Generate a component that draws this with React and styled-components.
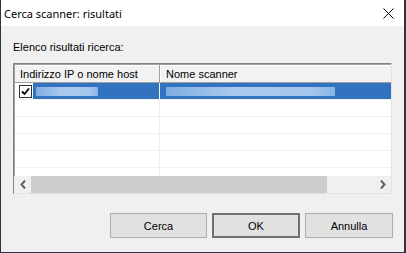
import React from 'react';
import styled, { createGlobalStyle } from 'styled-components';

const GlobalStyle = createGlobalStyle`
    html, body {
        margin: 0;
        padding: 0;
        background: #f0f0f0;
    }
    * {
        box-sizing: border-box;
    }
`;

const Window = styled.div`
    width: 406px;
    height: 253px;
    display: flex;
    flex-direction: column;
    background: #f0f0f0;
    border-left: 1px solid #2b3542;
    border-right: 2px solid #2b3542;
    border-bottom: 1px solid #2b3542;
    font-family: "Liberation Sans", Arial, sans-serif;
    font-size: 11px;
    color: #000;
`;

const TitleBar = styled.div`
    height: 26px;
    flex: none;
    display: flex;
    align-items: center;
    justify-content: space-between;
    background: #fff;
    padding: 0 10px 0 3px;
`;

const Title = styled.span`
    font-family: "Noto Sans", "Open Sans", sans-serif;
    font-size: 11px;
    line-height: 16px;
    padding-top: 1px;
`;

const CloseButton = styled.div`
    width: 12px;
    height: 12px;
    display: flex;
    align-items: center;
    justify-content: center;
`;

const Body = styled.div`
    flex: 1;
    display: flex;
    flex-direction: column;
    padding: 15px 11px 14px 12px;
`;

const Label = styled.div`
    line-height: 13px;
    margin-bottom: 9px;
`;

const ListView = styled.div`
    width: 379px;
    height: 131px;
    display: flex;
    flex-direction: column;
    background: #fff;
    border-top: 1px solid #828282;
    border-left: 1px solid #828282;
    border-right: 1px solid #e3e3e3;
    border-bottom: 1px solid #e3e3e3;
    box-shadow: inset 1px 1px 0 #a0a0a0;
    padding: 1px 0 0 1px;
    overflow: hidden;
`;

const HeaderRow = styled.div`
    height: 18px;
    flex: none;
    display: grid;
    grid-template-columns: 145px 1fr;
    background: #f2f2f2;
    border-bottom: 1px solid #a0a0a0;
    box-shadow: inset 0 1px 0 #fff;
`;

const HeaderCell = styled.div`
    display: flex;
    align-items: center;
    padding-left: ${p => p.$pad}px;
    border-right: ${p => (p.$divider ? '1px solid #a0a0a0' : 'none')};
    box-shadow: ${p => (p.$divider ? '1px 0 0 #fff' : 'none')};
    white-space: nowrap;
    overflow: hidden;
`;

const Rows = styled.div`
    flex: 1;
    overflow: hidden;
`;

const Row = styled.div`
    height: 17px;
    display: grid;
    grid-template-columns: 145px 1fr;
    border-bottom: 1px solid #f0f0f0;
`;

const Cell = styled.div`
    display: flex;
    align-items: center;
    border-right: ${p => (p.$divider ? `1px solid ${p.$selected ? '#5a8fd0' : '#f0f0f0'}` : 'none')};
    background: ${p => (p.$selected ? '#3173be' : 'transparent')};
    padding-left: ${p => p.$pad || 0}px;
`;

const CheckArea = styled.div`
    width: 18px;
    height: 100%;
    flex: none;
    background: #fff;
    display: flex;
    align-items: center;
    justify-content: center;
    padding-left: 2px;
`;

const CheckBox = styled.div`
    width: 13px;
    height: 13px;
    border: 1px solid #333;
    background: #fff;
    display: flex;
    align-items: center;
    justify-content: center;
`;

const Selection = styled.div`
    flex: 1;
    height: 100%;
    display: flex;
    align-items: center;
    padding-left: ${p => p.$pad}px;
    background: #3173be;
`;

const Blur = styled.div`
    width: ${p => p.$w}px;
    height: 9px;
    background: linear-gradient(90deg, #7eaee3 0%, #a9c9ee 40%, #a6c7ed 85%, #88b4e6 100%);
    border-radius: 1px;
`;

const ScrollBar = styled.div`
    height: 17px;
    flex: none;
    display: flex;
    background: #f0f0f0;
    margin-left: -1px;
`;

const ScrollButton = styled.div`
    width: 17px;
    flex: none;
    display: flex;
    align-items: center;
    justify-content: center;
`;

const Thumb = styled.div`
    width: 296px;
    height: 100%;
    background: #cdcdcd;
`;

const Track = styled.div`
    flex: 1;
`;

const ButtonRow = styled.div`
    display: flex;
    justify-content: flex-end;
    gap: 5px;
    margin-top: auto;
`;

const Button = styled.div`
    width: ${p => p.$w}px;
    height: 25px;
    display: flex;
    align-items: center;
    justify-content: center;
    background: #e1e1e1;
    border: ${p => (p.$default ? '2px solid #707070' : '1px solid #adadad')};
`;

const Chevron = ({ dir }) => (
    <svg width="8" height="9" viewBox="0 0 8 9">
        <path
            d={dir === 'left' ? 'M6 0.5 L2.5 4.5 L6 8.5' : 'M2 0.5 L5.5 4.5 L2 8.5'}
            fill="none"
            stroke="#606060"
            strokeWidth="2"
        />
    </svg>
);

const emptyRows = [1, 2, 3, 4, 5];

export default function App() {
    return (
        <>
            <GlobalStyle />
            <Window>
                <TitleBar>
                    <Title>Cerca scanner: risultati</Title>
                    <CloseButton>
                        <svg width="11" height="11" viewBox="0 0 11 11">
                            <path d="M0.5 0.5 L10.5 10.5 M10.5 0.5 L0.5 10.5" stroke="#000" strokeWidth="1" />
                        </svg>
                    </CloseButton>
                </TitleBar>
                <Body>
                    <Label>Elenco risultati ricerca:</Label>
                    <ListView>
                        <HeaderRow>
                            <HeaderCell $pad={5} $divider>Indirizzo IP o nome host</HeaderCell>
                            <HeaderCell $pad={6}>Nome scanner</HeaderCell>
                        </HeaderRow>
                        <Rows>
                            <Row>
                                <Cell $divider>
                                    <CheckArea>
                                        <CheckBox>
                                            <svg width="9" height="9" viewBox="0 0 9 9">
                                                <path d="M1 4.5 L3.5 7 L8 1.5" fill="none" stroke="#000" strokeWidth="1.8" />
                                            </svg>
                                        </CheckBox>
                                    </CheckArea>
                                    <Selection $pad={3}>
                                        <Blur $w={62} />
                                    </Selection>
                                </Cell>
                                <Cell $selected $pad={6}>
                                    <Blur $w={169} />
                                </Cell>
                            </Row>
                            {emptyRows.map(i => (
                                <Row key={i}>
                                    <Cell $divider />
                                    <Cell />
                                </Row>
                            ))}
                        </Rows>
                        <ScrollBar>
                            <ScrollButton><Chevron dir="left" /></ScrollButton>
                            <Thumb />
                            <Track />
                            <ScrollButton><Chevron dir="right" /></ScrollButton>
                        </ScrollBar>
                    </ListView>
                    <ButtonRow>
                        <Button $w={97}>Cerca</Button>
                        <Button $w={88} $default>OK</Button>
                        <Button $w={88}>Annulla</Button>
                    </ButtonRow>
                </Body>
            </Window>
        </>
    );
}
